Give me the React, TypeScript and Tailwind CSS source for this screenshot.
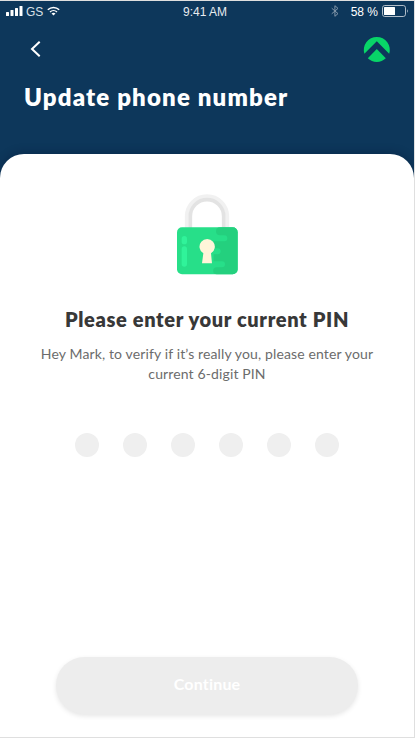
import { useState } from "react";

const PIN_LENGTH = 6;

function StatusBar() {
  return (
    <div className="relative flex h-5 items-center justify-between pl-1.5 pr-[5px] font-['Liberation_Sans',sans-serif] text-[12px] leading-5 text-white">
      <div className="flex items-center">
        <svg width="17" height="10" viewBox="0 0 17 10" fill="currentColor">
          <rect x="0" y="6" width="3" height="4" rx=".5" />
          <rect x="4.5" y="4" width="3" height="6" rx=".5" />
          <rect x="9" y="2" width="3" height="8" rx=".5" />
          <rect x="13.5" y="0" width="3" height="10" rx=".5" />
        </svg>
        <span className="ml-[3px] pt-px text-[#d9e0e7]">GS</span>
        <svg className="ml-1" width="13" height="10" viewBox="0 0 13 10" fill="none" stroke="currentColor">
          <path d="M.8 3.7C4 .6 9 .6 12.2 3.7" strokeWidth="1.5" />
          <path d="M3 6C5 4.1 8 4.1 10 6" strokeWidth="1.4" />
          <path d="M4.5 7.4C5.7 6.4 7.3 6.4 8.5 7.4L6.5 9.5Z" fill="currentColor" stroke="none" />
        </svg>
      </div>
      <span className="absolute left-[183px] pt-px text-[#e7ebef]">9:41 AM</span>
      <div className="flex items-center">
        <svg width="8" height="12" viewBox="0 0 8 12" fill="none" stroke="#8396a9" strokeWidth="1">
          <path d="M.7 3.2L7 8.6L3.9 11.3V.7L7 3.4L.7 8.8" />
        </svg>
        <span className="ml-[12px] pt-px">58 %</span>
        <svg className="ml-1" width="27" height="12" viewBox="0 0 27 12">
          <rect x=".5" y=".5" width="23" height="11" rx="2.3" fill="none" stroke="#b1bdc9" />
          <rect x="2" y="2" width="11" height="8" rx=".5" fill="#fff" />
          <path d="M25 4.2C26.4 4.8 26.4 7.2 25 7.8Z" fill="#8b9db0" />
        </svg>
      </div>
    </div>
  );
}

function BrandMark() {
  return (
    <svg className="overflow-visible" width="27" height="26" viewBox="0 0 27 26" fill="#08d568">
      <path d="M1.4 17.8A13 13 0 1 1 26.2 17.8L13.8 5.2Z" />
      <path d="M13.8 13L22.8 22.3A13 13 0 0 1 4.8 22.3Z" />
    </svg>
  );
}

function Padlock() {
  return (
    <svg width="61" height="81" viewBox="36 26 183 243">
      <path d="M65.5 132V93a60.5 60.5 0 0 1 121 0V132" fill="none" stroke="#f1f1f1" strokeWidth="12" />
      <path d="M76 132V93a50 50 0 0 1 100 0V132" fill="none" stroke="#e3e3e3" strokeWidth="11" />
      <rect x="36" y="126" width="182" height="141" rx="15" fill="#27df89" />
      <path
        d="M165 126H203A15 15 0 0 1 218 141V252A15 15 0 0 1 203 267H155A9 9 0 0 1 155 246H171A9 9 0 0 0 171 228H146V207H158A9 9 0 0 0 158 189H145V168H178A9 9 0 0 0 178 150H165A12 12 0 0 1 165 126Z"
        fill="#24d07e"
      />
      <rect x="50" y="152" width="16" height="25" rx="8" fill="#30f39a" />
      <rect x="50" y="183" width="16" height="61" rx="8" fill="#30f39a" />
      <path d="M115 204A23 23 0 1 1 138 204L141 234H111Z" fill="#fff5d9" />
    </svg>
  );
}

export default function App() {
  const [pin] = useState("");

  return (
    <div className="h-[738px] w-[415px] overflow-hidden border-b border-r border-t border-[#dfdfdf] bg-white font-[Lato,sans-serif]">
      <header className="h-[180px] bg-[#0d375b] text-white">
        <StatusBar />
        <div className="flex h-14 items-center justify-between pl-[30px] pr-6">
          <button aria-label="Back">
            <svg width="11" height="16" viewBox="0 0 11 16" fill="none" stroke="currentColor" strokeWidth="2">
              <path d="M9.7 .7L2 8L9.7 15.3" />
            </svg>
          </button>
          <BrandMark />
        </div>
        <h1 className="whitespace-nowrap pl-6 pt-1 text-2xl font-extrabold leading-8 tracking-[1.17px]">
          Update phone number
        </h1>
      </header>

      <main className="relative -mt-[27px] flex h-[583px] flex-col items-center rounded-t-[24px] bg-white pt-10 shadow-[0_-2px_8px_rgba(0,20,50,0.3)]">
        <Padlock />
        <h2 className="mt-[30px] whitespace-nowrap text-xl font-extrabold leading-7 tracking-[0.65px] text-[#383838]">
          Please enter your current PIN
        </h2>
        <p className="mt-[11px] whitespace-nowrap text-center text-sm leading-5 tracking-[0.13px] text-[#6c6c6c]">
          Hey Mark, to verify if it’s really you, please enter your
          <br />
          current 6-digit PIN
        </p>

        <div className="mt-[49px] flex gap-6">
          {Array.from({ length: PIN_LENGTH }, (_, i) => (
            <span key={i} className={`size-6 rounded-full ${i < pin.length ? "bg-[#08d568]" : "bg-[#efefef]"}`} />
          ))}
        </div>

        <button
          disabled={pin.length < PIN_LENGTH}
          className="mb-[23px] mt-auto h-[57px] w-[302px] rounded-full bg-[#ededed] pb-[3px] text-base font-bold tracking-[0.2px] text-white shadow-[0_2px_5px_rgba(0,0,0,0.1)]"
        >
          Continue
        </button>
      </main>
    </div>
  );
}
